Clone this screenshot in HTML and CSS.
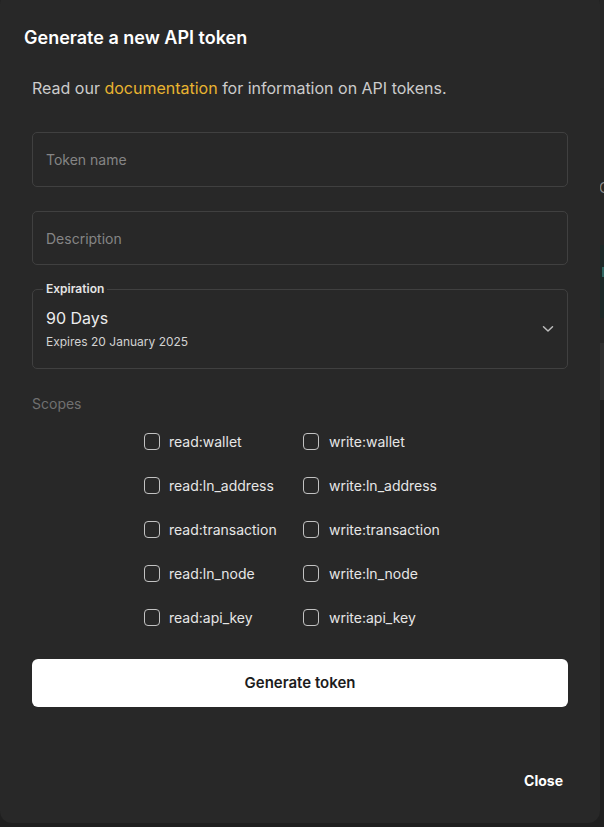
FILE: index.html
```html
<!DOCTYPE html>
<html lang="en">
<head>
<meta charset="utf-8">
<title>Generate a new API token</title>
<link rel="stylesheet" href="styles.css">
</head>
<body>
<div class="screen">
  <div class="dialog" role="dialog" aria-labelledby="dlg-title">
    <h2 class="title" id="dlg-title">Generate a new API token</h2>
    <div class="content">
      <p class="intro">Read our <a class="link" href="#">documentation</a> for information on API tokens.</p>
      <input class="field field-name" type="text" placeholder="Token name">
      <input class="field field-desc" type="text" placeholder="Description">
      <fieldset class="select">
        <legend class="select-label">Expiration</legend>
        <div class="select-body">
          <div class="select-text">
            <div class="select-value">90 Days</div>
            <div class="select-hint">Expires 20 January 2025</div>
          </div>
          <svg class="chevron" width="12" height="8" viewBox="0 0 12 8" aria-hidden="true"><path d="M1.5 1.8 6 6 10.5 1.8" fill="none" stroke="#bdbdbd" stroke-width="1.5" stroke-linecap="round" stroke-linejoin="round"/></svg>
        </div>
      </fieldset>
      <div class="scopes-label">Scopes</div>
      <div class="scopes">
        <label class="scope"><span class="box"></span><span>read:wallet</span></label>
        <label class="scope"><span class="box"></span><span>write:wallet</span></label>
        <label class="scope"><span class="box"></span><span>read:ln_address</span></label>
        <label class="scope"><span class="box"></span><span>write:ln_address</span></label>
        <label class="scope"><span class="box"></span><span>read:transaction</span></label>
        <label class="scope"><span class="box"></span><span>write:transaction</span></label>
        <label class="scope"><span class="box"></span><span>read:ln_node</span></label>
        <label class="scope"><span class="box"></span><span>write:ln_node</span></label>
        <label class="scope"><span class="box"></span><span>read:api_key</span></label>
        <label class="scope"><span class="box"></span><span>write:api_key</span></label>
      </div>
      <button class="primary" type="button">Generate token</button>
    </div>
    <div class="actions">
      <button class="text-btn" type="button">Close</button>
    </div>
  </div>
  <div class="page-strip" aria-hidden="true">
    <div class="strip-top"></div>
    <div class="strip-mid"><span class="strip-char">C</span></div>
    <div class="strip-teal"><span class="strip-mark"></span></div>
    <div class="strip-gap"></div>
    <div class="strip-card"></div>
    <div class="strip-rest"></div>
  </div>
</div>
</body>
</html>
```

FILE: styles.css
```css
* { box-sizing: border-box; }

html, body {
  margin: 0;
  padding: 0;
  background: #1f1f1f;
  font-family: Inter, "Noto Sans", "Liberation Sans", sans-serif;
}

.screen {
  display: flex;
  align-items: flex-start;
  width: 604px;
  height: 827px;
  overflow: hidden;
}

.dialog {
  flex: 0 0 600px;
  margin-top: -8px;
  background: #282828;
  border-radius: 12px;
  padding-top: 32px;
  display: flex;
  flex-direction: column;
}

.title {
  margin: 0;
  padding: 0 24px;
  font-size: 18px;
  line-height: 28px;
  font-weight: 600;
  color: #ffffff;
}

.content {
  padding: 0 32px;
  display: flex;
  flex-direction: column;
}

.intro {
  margin: 24px 0 0;
  font-size: 16px;
  line-height: 24px;
  color: #cccccc;
}

.link {
  color: #e8b430;
  text-decoration: none;
}

.field {
  display: block;
  width: 100%;
  margin: 0;
  padding: 0 13px;
  background: transparent;
  border: 1px solid #404040;
  border-radius: 5px;
  font-family: inherit;
  font-size: 14px;
  color: #e0e0e0;
  outline: none;
}
.field::placeholder { color: #858585; }

.field-name { margin-top: 32px; height: 55px; }
.field-desc { margin-top: 24px; height: 54px; }

.select {
  margin: 16px 0 0;
  padding: 0 13px 17px 13px;
  border: 1px solid #404040;
  border-radius: 5px;
  min-width: 0;
}

.select-label {
  margin-left: -3px;
  padding: 0 3px;
  font-size: 12px;
  line-height: 16px;
  font-weight: 600;
  color: #e4e4e4;
}

.select-body {
  display: flex;
  align-items: center;
  justify-content: space-between;
  padding-top: 9px;
}

.select-text {
  display: flex;
  flex-direction: column;
  gap: 3px;
}

.select-value {
  font-size: 16px;
  line-height: 24px;
  color: #ececec;
}

.select-hint {
  font-size: 12px;
  line-height: 18px;
  color: #d2d2d2;
}

.chevron {
  display: block;
  margin-top: 0;
}

.scopes-label {
  margin-top: 25px;
  font-size: 14px;
  line-height: 20px;
  color: #707070;
}

.scopes {
  margin-top: 5px;
  align-self: center;
  display: grid;
  grid-template-columns: 159px 153px;
  grid-auto-rows: 44px;
}

.scope {
  display: flex;
  align-items: center;
  gap: 9px;
  font-size: 14px;
  color: #e6e6e6;
  white-space: nowrap;
}
.scope + .scope:nth-child(even) { gap: 10px; }

.box {
  flex: 0 0 auto;
  width: 16px;
  height: 17px;
  border: 1.5px solid #c2c2c2;
  border-radius: 4px;
}

.primary {
  margin-top: 20px;
  height: 48px;
  width: 100%;
  padding: 0 0 2px;
  border: none;
  border-radius: 6px;
  background: #ffffff;
  color: #1c1c1c;
  font-family: inherit;
  font-size: 15px;
  font-weight: 600;
  cursor: pointer;
}

.actions {
  display: flex;
  justify-content: flex-end;
  padding: 64px 37px 32px 0;
}

.text-btn {
  padding: 0;
  border: none;
  background: none;
  font-family: inherit;
  font-size: 14px;
  line-height: 20px;
  font-weight: 700;
  color: #ffffff;
}

.page-strip {
  flex: 1 1 auto;
  height: 827px;
  display: flex;
  flex-direction: column;
  background: #1e1e1e;
  overflow: hidden;
}
.strip-top { height: 88px; background: #262626; }
.strip-mid {
  height: 157px;
  background: #252525;
  position: relative;
}
.strip-char {
  position: absolute;
  left: -1px;
  top: 90px;
  font-size: 14px;
  line-height: 20px;
  color: #8a8a8a;
}
.strip-teal {
  height: 73px;
  background: #1c2827;
  position: relative;
}
.strip-mark {
  position: absolute;
  left: 2px;
  top: 22px;
  width: 2px;
  height: 10px;
  background: #2f6560;
}
.strip-gap { height: 25px; background: #252525; }
.strip-card { height: 57px; background: #2e2e2e; }
.strip-rest { flex: 1; background: #1f1f1f; }
```
